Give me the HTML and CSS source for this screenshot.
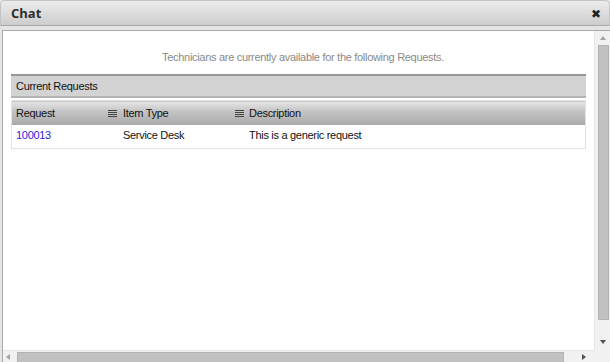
FILE: index.html
```html
<!DOCTYPE html>
<html>
<head>
<meta charset="utf-8">
<link rel="stylesheet" href="styles.css">
</head>
<body>
<div class="dialog">
  <div class="titlebar">
    <span class="title">Chat</span>
    <span class="close">✖</span>
  </div>
  <div class="viewport">
    <div class="main">
      <p class="notice">Technicians are currently available for the following Requests.</p>
      <div class="panel">
        <div class="panel-head">Current Requests</div>
        <table class="grid">
          <thead>
            <tr>
              <th class="c1"><span>Request</span><span class="menu"></span></th>
              <th class="c2"><span>Item Type</span><span class="menu"></span></th>
              <th class="c3"><span>Description</span></th>
            </tr>
          </thead>
          <tbody>
            <tr>
              <td class="c1"><a class="req" href="#">100013</a></td>
              <td class="c2">Service Desk</td>
              <td class="c3">This is a generic request</td>
            </tr>
          </tbody>
        </table>
      </div>
    </div>
    <div class="vscroll">
      <span class="arrow up"></span>
      <span class="vthumb"></span>
      <span class="arrow down"></span>
    </div>
    <div class="hscroll">
      <span class="arrow left"></span>
      <span class="hthumb"></span>
      <span class="arrow right"></span>
    </div>
    <div class="corner"></div>
  </div>
</div>
</body>
</html>
```

FILE: styles.css
```css
html, body {
  margin: 0;
  padding: 0;
  background: #ffffff;
}
body {
  width: 610px;
  height: 362px;
  overflow: hidden;
  font-family: "Liberation Sans", Arial, sans-serif;
  font-size: 11px;
  letter-spacing: -0.3px;
}
.dialog {
  display: flex;
  flex-direction: column;
  height: 362px;
  background: #e4e4e4;
}
.titlebar {
  height: 24px;
  display: flex;
  align-items: center;
  justify-content: space-between;
  padding: 0 8px 0 10px;
  background: linear-gradient(#ececec, #cdcdcd);
  border: 1px solid #c4c4c4;
  border-bottom-color: #a8a8a8;
  border-radius: 5px 5px 0 0;
  letter-spacing: 0;
}
.title {
  font-family: "Open Sans", sans-serif;
  font-weight: bold;
  font-size: 13px;
  color: #2e2e2e;
}
.close {
  font-size: 12px;
  color: #222;
  line-height: 1;
  margin-top: 1px;
}
.viewport {
  flex: 1;
  margin: 4px 0 0 2px;
  display: grid;
  grid-template-columns: 1fr 16px;
  grid-template-rows: 1fr 12px;
  border-top: 1px solid #a9a9a9;
  border-left: 1px solid #a9a9a9;
  background: #fff;
  min-height: 0;
}
.main {
  padding: 0 8px 0 8px;
}
.notice {
  margin: 20px 0 0 0;
  padding-left: 9px;
  text-align: center;
  color: #8a8a8a;
  line-height: 13px;
}
.panel {
  margin-top: 10px;
}
.panel-head {
  background: #d3d3d3;
  border-top: 2px solid #979797;
  border-bottom: 2px solid #b4b4b4;
  height: 20px;
  line-height: 20px;
  padding-left: 5px;
  color: #111;
}
.grid {
  width: 100%;
  margin-top: 2px;
  border-collapse: collapse;
  border: 1px solid #e2e2e2;
}
.grid th {
  height: 24px;
  padding: 0 4px;
  text-align: left;
  font-weight: normal;
  color: #111;
  background: linear-gradient(#e6e6e6 0%, #c4c4c4 40%, #a9a9a9 100%);
}
.grid th.c1, .grid th.c2 {
  position: relative;
}
.grid th .menu {
  position: absolute;
  right: 1px;
  top: 9px;
  width: 9px;
  height: 7px;
  background: repeating-linear-gradient(#444 0 1px, transparent 1px 2px);
}
.grid td {
  height: 20px;
  padding: 0 4px 3px 4px;
  color: #111;
  vertical-align: middle;
}
.grid .c1 { width: 98px; }
.grid .c2 { width: 118px; }
.grid td.c2, .grid th.c2 { padding-left: 5px; }
.req {
  color: #2a1fd6;
  text-decoration: none;
}
.vscroll {
  background: #f1f1f1;
  display: flex;
  flex-direction: column;
  align-items: center;
  border-left: 1px solid #e6e6e6;
}
.vthumb {
  flex: 1;
  width: 11px;
  background: #c1c1c1;
  border: 1px solid #b3b3b3;
  box-sizing: border-box;
  margin: 0 0 0 1px;
}
.arrow {
  width: 0;
  height: 0;
  flex: none;
}
.arrow.up {
  margin: 5px 0 5px 0;
  border-left: 3.5px solid transparent;
  border-right: 3.5px solid transparent;
  border-bottom: 4px solid #a3a3a3;
}
.arrow.down {
  margin: 20px 0 6px 0;
  border-left: 3.5px solid transparent;
  border-right: 3.5px solid transparent;
  border-top: 4px solid #505050;
}
.hscroll {
  background: #f1f1f1;
  display: flex;
  align-items: center;
  border-top: 1px solid #e6e6e6;
}
.hthumb {
  flex: 1;
  height: 11px;
  background: #c1c1c1;
  border: 1px solid #b3b3b3;
  box-sizing: border-box;
  margin: 1px 0 0 0;
}
.arrow.left {
  margin: 0 7px 0 3px;
  border-top: 3.5px solid transparent;
  border-bottom: 3.5px solid transparent;
  border-right: 4px solid #a3a3a3;
}
.arrow.right {
  margin: 0 8px 0 18px;
  border-top: 3.5px solid transparent;
  border-bottom: 3.5px solid transparent;
  border-left: 4px solid #505050;
}
.corner {
  background: #f1f1f1;
}
```
